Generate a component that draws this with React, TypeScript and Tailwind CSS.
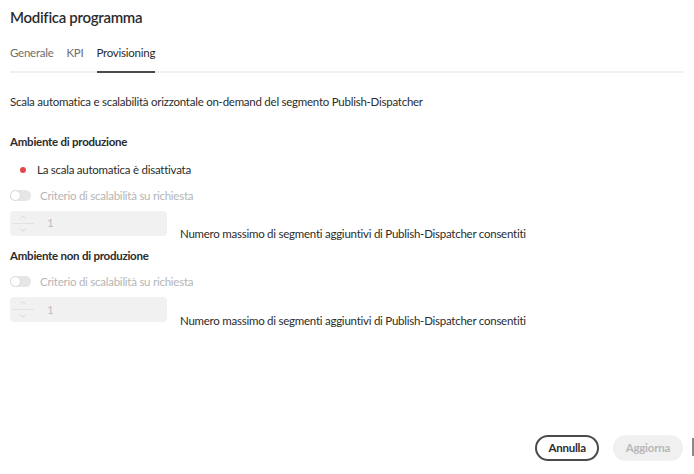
import { ChevronUp, ChevronDown } from 'lucide-react';

function Stepper() {
  return (
    <div className="w-[157px] h-[25px] bg-[#f1f1f1] rounded-[4px] flex items-center">
      <div className="w-[24px] flex flex-col items-center text-[#c8c8c8] ml-[1px]">
        <ChevronUp size={10} strokeWidth={1.5} />
        <div className="w-[22px] h-px bg-[#e2e2e2] my-[1px]" />
        <ChevronDown size={10} strokeWidth={1.5} />
      </div>
      <span className="ml-[12px] text-[#bdbdbd]">1</span>
    </div>
  );
}

function Toggle() {
  return (
    <div className="w-[21px] h-[11px] rounded-full bg-[#e6e6e6] relative">
      <div className="absolute left-0 top-0 w-[11px] h-[11px] rounded-full bg-white border-[1.5px] border-[#dadada]" />
    </div>
  );
}

function ScalingBlock({ top }: { top: string }) {
  return (
    <>
      <div className={`flex items-center h-[20px] ${top}`}>
        <Toggle />
        <span className="ml-[9px] text-[#b5b5b5]">Criterio di scalabilità su richiesta</span>
      </div>
      <div className="flex items-end mt-[5px]">
        <Stepper />
        <span className="ml-[13px] mb-[-7px]">Numero massimo di segmenti aggiuntivi di Publish-Dispatcher consentiti</span>
      </div>
    </>
  );
}

export default function App() {
  return (
    <div
      className="w-[694px] h-[474px] bg-white text-[#2c2c2c] text-[11.5px] tracking-[-0.25px] relative overflow-hidden"
      style={{ fontFamily: 'Lato, "Open Sans", sans-serif' }}
    >
      <div className="px-[10px] pt-[7px]">
        {/* Header */}
        <h1 className="text-[15px] font-semibold tracking-[-0.3px] text-[#2c2c2c] leading-[20px]">Modifica programma</h1>

        {/* Tabs */}
        <div className="mt-[17px] flex border-b-2 border-[#f0f0f0] w-[674px] h-[29px]">
          <div className="text-[#6e6e6e] mr-[13px]">Generale</div>
          <div className="text-[#6e6e6e] mr-[13px]">KPI</div>
          <div className="text-[#2c2c2c] border-b-2 border-[#4b4b4b] h-[29px] mb-[-2px]">Provisioning</div>
        </div>

        <p className="mt-[20px]">Scala automatica e scalabilità orizzontale on-demand del segmento Publish-Dispatcher</p>

        <h2 className="mt-[23px] font-bold">Ambiente di produzione</h2>

        <div className="flex items-center mt-[11px] h-[16px]">
          <span className="w-[6px] h-[6px] rounded-full bg-[#e34850] ml-[10px]" />
          <span className="ml-[11px]">La scala automatica è disattivata</span>
        </div>

        <ScalingBlock top="mt-[8px]" />

        <h2 className="mt-[11px] font-bold">Ambiente non di produzione</h2>

        <ScalingBlock top="mt-[8px]" />
      </div>

      {/* Footer */}
      <div className="absolute right-[11px] bottom-[13px] flex items-center gap-[14px]">
        <button className="h-[26px] px-[11px] rounded-full border-2 border-[#4b4b4b] font-bold text-[#2c2c2c]">
          Annulla
        </button>
        <button className="h-[26px] px-[13px] rounded-full bg-[#f0f0f0] font-bold text-[#b8b8b8]">
          Aggiorna
        </button>
      </div>
      <div className="absolute right-0 bottom-[18px] w-[2px] h-[18px] bg-[#8a8a8a]" />
    </div>
  );
}
